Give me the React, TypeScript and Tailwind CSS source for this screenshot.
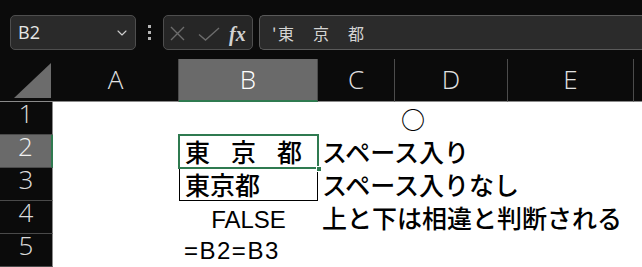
import { ChevronDown } from "lucide-react";

const jp = "font-['Noto_Sans_CJK_JP',sans-serif] font-medium";
const ui = "font-['Open_Sans',sans-serif]";
const arial = "font-['Liberation_Sans',Arial,sans-serif]";

const ColHead = ({ label }: { label: string }) => (
  <div
    className={`border-b border-r border-b-[#8a8a8a] border-r-[#4c4c4c] text-center text-[26px] leading-[40px] font-light text-[#e2e2e2] ${ui}`}
  >
    {label}
  </div>
);

const RowHead = ({ n, active = false }: { n: number; active?: boolean }) => (
  <div
    className={`border-b border-[#4a4a4a] text-center text-[26px] leading-[23px] font-light ${ui} ${
      active
        ? "bg-[#6a6a6a] border-r-2 border-r-[#2f7a50] text-[#f0f0f0]"
        : "border-r border-r-[#8a8a8a] text-[#dcdcdc]"
    }`}
  >
    {n}
  </div>
);

// cells with text get a z-index so their overflow stays above the empty neighbours
const Cell = ({ children, className = "" }: { children?: React.ReactNode; className?: string }) => (
  <div className={`bg-white whitespace-nowrap text-black ${children ? "relative z-10" : ""} ${className}`}>
    {children}
  </div>
);

export default function App() {
  return (
    <div className="w-[642px] h-[267px] overflow-hidden bg-[#0b0b0b] flex flex-col">
      {/* Toolbar */}
      <div className="h-[59px] shrink-0 flex items-start pt-[15px] pl-[10px]">
        {/* Name box */}
        <div className="w-[126px] h-[35px] rounded-[5px] border border-[#4e4e4e] bg-[#2a2a2a] flex items-center justify-between pl-[7px] pr-[5px]">
          <span className={`text-[18px] text-[#e6e6e6] ${ui}`}>B2</span>
          <ChevronDown className="w-[16px] h-[16px] text-[#cfcfcf]" strokeWidth={1.6} />
        </div>

        {/* Separator dots */}
        <div className="w-[27px] h-[35px] flex flex-col items-center justify-center gap-[3px]">
          <span className="w-[3px] h-[3px] bg-[#b5b5b5]" />
          <span className="w-[3px] h-[3px] bg-[#b5b5b5]" />
          <span className="w-[3px] h-[3px] bg-[#b5b5b5]" />
        </div>

        {/* Cancel / enter / fx */}
        <div className="w-[90px] h-[35px] rounded-[5px] border border-[#4e4e4e] bg-[#262626] flex items-center pl-[6px] pt-[2px]">
          <svg width="15" height="15" viewBox="0 0 15 15" className="shrink-0">
            <path d="M1 1 14 14M14 1 1 14" stroke="#6c6c6c" strokeWidth="1.4" fill="none" />
          </svg>
          <svg width="22" height="14" viewBox="0 0 22 14" className="ml-[13px] shrink-0">
            <path d="M1 7.5 7.5 13 21 1" stroke="#6c6c6c" strokeWidth="1.4" fill="none" />
          </svg>
          <span className="ml-[9px] text-[20px] leading-none italic font-bold text-[#d2d2d2] font-['Liberation_Serif',serif]">
            fx
          </span>
        </div>

        {/* Formula bar */}
        <div className="ml-[6px] flex-1 h-[35px] rounded-l-[5px] border border-r-0 border-[#5a5a5a] bg-[#2b2b2b] flex items-center pl-[12px]">
          <span className="text-[16px] tracking-[1.5px] text-[#d4d4d4] font-['Noto_Sans_CJK_JP',sans-serif]">'東　京　都</span>
        </div>
      </div>

      {/* Sheet */}
      <div className="grid grid-cols-[53px_126px_139px_77px_113px_126px_1fr] grid-rows-[43px_repeat(5,33px)]">
        {/* Header row */}
        <div className="border-b border-[#8a8a8a] relative">
          <svg width="53" height="42" className="absolute left-0 top-0">
            <polygon points="51,4 51,39 14,39" fill="#6c6c6c" />
          </svg>
        </div>
        <ColHead label="A" />
        <div
          className={`bg-[#6a6a6a] border-b-2 border-r border-b-[#2f7a50] border-r-[#4c4c4c] text-center text-[26px] leading-[40px] font-light text-white ${ui}`}
        >
          B
        </div>
        <ColHead label="C" />
        <ColHead label="D" />
        <ColHead label="E" />
        <div className="border-b border-[#8a8a8a]" />

        {/* Row 1 */}
        <RowHead n={1} />
        <Cell />
        <Cell />
        <Cell />
        <Cell className={`pl-[6px] text-[24px] leading-[33px] ${jp}`}>○</Cell>
        <Cell />
        <Cell />

        {/* Row 2 */}
        <RowHead n={2} active />
        <Cell />
        <Cell className={`!z-20 pl-[6px] text-[25px] leading-[33px] tracking-[-2px] ${jp}`}>
          東　京　都
          <div className="absolute -left-px -top-px -right-px -bottom-px border-2 border-[#2f7a50]" />
          <div className="absolute -right-[4px] -bottom-[4px] w-[6px] h-[6px] bg-[#2f7a50] border border-white" />
        </Cell>
        <Cell className={`pl-[4px] text-[25px] leading-[33px] ${jp}`}>スペース入り</Cell>
        <Cell />
        <Cell />
        <Cell />

        {/* Row 3 */}
        <RowHead n={3} />
        <Cell />
        <Cell className={`pl-[6px] text-[25px] leading-[33px] ${jp}`}>
          東京都
          <div className="absolute inset-0 border border-black" />
        </Cell>
        <Cell className={`pl-[4px] text-[25px] leading-[33px] ${jp}`}>スペース入りなし</Cell>
        <Cell />
        <Cell />
        <Cell />

        {/* Row 4 */}
        <RowHead n={4} />
        <Cell />
        <Cell className={`pt-[2px] text-center text-[24px] leading-[33px] ${arial}`}>FALSE</Cell>
        <Cell className={`pl-[4px] text-[25px] leading-[33px] ${jp}`}>上と下は相違と判断される</Cell>
        <Cell />
        <Cell />
        <Cell />

        {/* Row 5 */}
        <RowHead n={5} />
        <Cell />
        <Cell className={`pl-[5px] text-[24px] leading-[33px] tracking-[1.5px] ${arial}`}>=B2=B3</Cell>
        <Cell />
        <Cell />
        <Cell />
        <Cell />
      </div>
    </div>
  );
}
